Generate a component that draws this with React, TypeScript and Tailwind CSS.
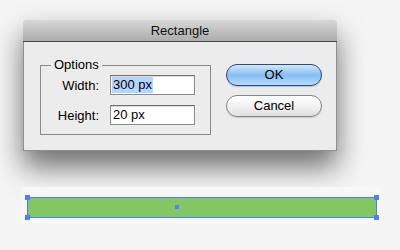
import React from 'react'

const font = { fontFamily: '"Liberation Sans", Arial, sans-serif' }

const Field: React.FC<{ label: string; value: string; selected?: boolean }> = ({ label, value, selected }) => (
  <div className="flex items-center h-[20px]">
    <span className="w-[58px] text-right text-[13px] text-black leading-none">{label}</span>
    <div className="ml-[11px] w-[85px] h-[20px] bg-white border border-[#8c8c8c] border-t-[#6e6e6e] shadow-[inset_0_1px_1px_rgba(0,0,0,0.15)] flex items-center pl-[1px]">
      <span className={selected ? 'bg-[#b4d5fe] px-[1px] h-[16px] flex items-center text-[13px] text-black' : 'px-[1px] text-[13px] text-black'}>
        {value}
      </span>
    </div>
  </div>
)

export default function App() {
  return (
    <div className="w-[400px] h-[250px] bg-[#f4f4f4] overflow-hidden" style={font}>
      {/* Dialog */}
      <div className="ml-[23px] mt-[19px] w-[314px] shadow-[0_16px_28px_rgba(0,0,0,0.55)] rounded-t-[4px]">
        <div className="h-[23px] rounded-t-[4px] bg-gradient-to-b from-[#d8d8d8] to-[#acacac] border-b border-[#4a4a4a] border-t border-t-[#e6e6e6] flex items-center justify-center">
          <span className="text-[13px] text-[#111]">Rectangle</span>
        </div>
        <div className="h-[109px] bg-[#ececec] border-x border-b border-[#8e8e8e] flex items-start pl-[16px]">
          <fieldset className="mt-[15px] w-[171px] h-[78px] border border-[#8a8a8a] px-0 pb-[10px]">
            <legend className="ml-[10px] px-[3px] text-[13px] text-black leading-[16px]">Options</legend>
            <div className="flex flex-col gap-[10px] pt-[2px]">
              <Field label="Width:" value="300 px" selected />
              <Field label="Height:" value="20 px" />
            </div>
          </fieldset>
          <div className="ml-[15px] mt-[22px] flex flex-col gap-[9px] w-[96px]">
            <button className="h-[22px] rounded-full border border-[#2e4a86] bg-gradient-to-b from-[#d2e8fc] via-[#86bdf2] to-[#b4dcfc] text-[13px] text-black shadow-[0_1px_1px_rgba(0,0,0,0.2)]">
              OK
            </button>
            <button className="h-[22px] rounded-full border border-[#858585] bg-gradient-to-b from-[#ffffff] via-[#f2f2f2] to-[#e0e0e0] text-[13px] text-black shadow-[0_1px_1px_rgba(0,0,0,0.15)]">
              Cancel
            </button>
          </div>
        </div>
      </div>

      {/* Selected rectangle on the artboard */}
      <div className="mt-[36px] ml-[21px] w-[360px] h-[36px] bg-[#f7f7f7] pt-[10px] pl-[6px]">
        <div className="relative w-[350px] h-[21px] bg-[#84c664] border border-[#4c7ff6]">
          <div className="absolute -left-[3px] -top-[3px] w-[5px] h-[5px] bg-[#4f80ff]" />
          <div className="absolute -right-[3px] -top-[3px] w-[5px] h-[5px] bg-[#4f80ff]" />
          <div className="absolute -left-[3px] -bottom-[3px] w-[5px] h-[5px] bg-[#4f80ff]" />
          <div className="absolute -right-[3px] -bottom-[3px] w-[5px] h-[5px] bg-[#4f80ff]" />
          <div className="absolute left-[147px] top-[7px] w-[4px] h-[4px] bg-[#4f80ff]" />
        </div>
      </div>
    </div>
  )
}
